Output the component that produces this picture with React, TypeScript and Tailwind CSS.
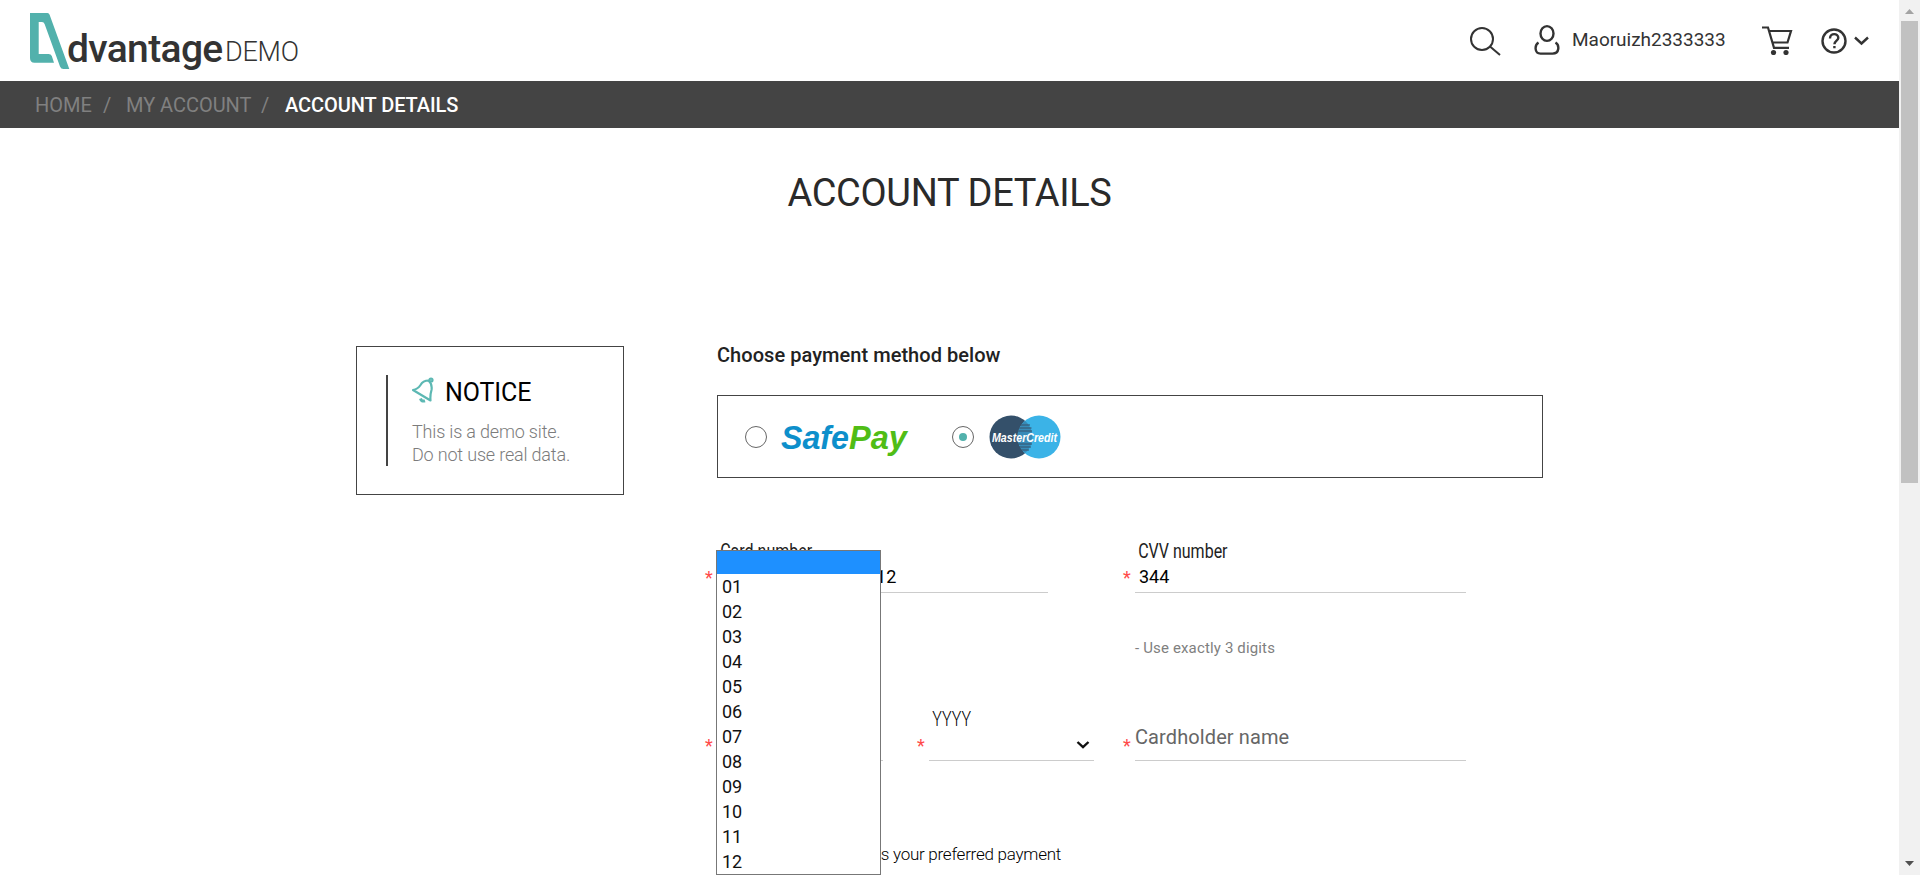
import React from "react";

const MONTHS = ["01", "02", "03", "04", "05", "06", "07", "08", "09", "10", "11", "12"];

function Logo() {
  return (
    <div className="flex items-start">
      <svg width="40" height="58" viewBox="0 0 40 58" className="mt-[12px] shrink-0">
        <path
          fill="#52b1ac"
          fillRule="evenodd"
          d="M0 1H17.500Q19 1 19.600 2.700L39.300 57H33.500Q31 57 30 54.500L14.600 12Q13.900 10 12 10H8.700V42H18.500Q21 42 21.800 44L24 50.700H4.500Q0 50.700 0 46Z"
        />
      </svg>
      <span className="-ml-[3px] mt-[24px] w-[158px] whitespace-nowrap text-[39px] leading-[50px] font-medium tracking-[-0.65px] text-[#333]">
        dvantage
      </span>
      <span className="mt-[32px] whitespace-nowrap text-[27px] leading-[40px] font-light tracking-[-0.25px] text-[#333]">DEMO</span>
    </div>
  );
}

function HeaderIcons() {
  return (
    <div className="flex items-start pr-[29px] text-[#333]">
      <svg width="32" height="30" viewBox="0 0 32 30" fill="none" stroke="currentColor" strokeWidth="2" className="mt-[26px]">
        <circle cx="12" cy="13" r="11" />
        <path d="M20 20.500L30 29" />
      </svg>
      <svg width="26" height="32" viewBox="0 0 26 32" fill="none" stroke="currentColor" strokeWidth="2.4" className="ml-[32px] mt-[24px]">
        <ellipse cx="13" cy="9.500" rx="6.500" ry="7.400" />
        <path d="M4.500 18.500C.5 21 .2 29.600 6.500 29.600H18.500C25.800 29.600 25.500 21 21.500 18.500" />
      </svg>
      <span className="ml-[12px] mt-[28px] w-[156px] whitespace-nowrap text-[19px] leading-6 tracking-[-0.02px] text-[#333]">Maoruizh2333333</span>
      <svg width="32" height="30" viewBox="0 0 32 30" fill="none" stroke="currentColor" strokeWidth="2.200" className="ml-[34px] mt-[25px]">
        <path d="M0 2.500H6L12 22.800H27M7.500 6H29L25.500 17.500H10.500" />
        <circle cx="11.500" cy="27.500" r="2.600" fill="currentColor" stroke="none" />
        <circle cx="24" cy="27.500" r="2.600" fill="currentColor" stroke="none" />
      </svg>
      <svg width="50" height="28" viewBox="0 0 50 28" fill="none" stroke="currentColor" strokeWidth="2.400" className="ml-[26px] mt-[27px]">
        <circle cx="14" cy="14" r="11.500" />
        <path d="M10 11.500C10 5.500 18.500 6 18.300 11C18.200 13.500 14.500 13.800 14.400 17.200M14.400 19V21.200" />
        <path d="M35 10.500L41.500 16.500L48 10.500" />
      </svg>
    </div>
  );
}

function Bell() {
  return (
    <svg width="22" height="26" viewBox="0 0 22 26" fill="none" stroke="#5cb8b3" strokeWidth="2.200" strokeLinejoin="round" className="mt-[2px]">
      <path d="M1 13Q6 12 8.500 8Q11 3.500 16.500 3.500Q20.500 7 19.500 13Q18 18 18.500 23.500Z" />
      <circle cx="19" cy="3" r="1.500" />
      <path d="M8.500 21.500Q9.500 25 13 23.800" strokeWidth="3" />
    </svg>
  );
}

function Radio({ checked = false }: { checked?: boolean }) {
  return (
    <span className="flex size-[22px] shrink-0 items-center justify-center rounded-full border border-[#666]">
      {checked && <span className="size-2 rounded-full bg-[#52b1ac]" />}
    </span>
  );
}

function SafePay() {
  return (
    <svg width="140" height="50" viewBox="0 0 140 50" fontFamily="Liberation Sans, sans-serif" fontWeight="700" fontStyle="italic" fontSize="33">
      <text x="0" y="37" textLength="68" lengthAdjust="spacingAndGlyphs" fill="#0d8fcb">Safe</text>
      <text x="68" y="37" textLength="58" lengthAdjust="spacingAndGlyphs" fill="#50bd16">Pay</text>
    </svg>
  );
}

function MasterCredit() {
  return (
    <svg width="72" height="44" viewBox="0 0 72 44">
      <circle cx="22" cy="22" r="21.500" fill="#34506a" />
      <circle cx="50" cy="22" r="21.500" fill="#3bb3e7" />
      <path d="M36 5.700A21.500 21.500 0 0 1 36 38.300A21.500 21.500 0 0 1 36 5.700Z" fill="#388bb8" />
      <path d="M31 10H41M29.500 13H42.500M29 16H43M29 29H43M30 32H42M32 35H40" stroke="#34506a" strokeWidth="1" />
      <text x="3" y="26.500" textLength="65" lengthAdjust="spacingAndGlyphs" fill="#fff" fontFamily="Liberation Sans, sans-serif" fontWeight="700" fontStyle="italic" fontSize="12.500">
        MasterCredit
      </text>
    </svg>
  );
}

type FieldProps = { label?: string; value?: string; placeholder?: string; width: string; arrow?: boolean; light?: boolean };

function Field({ label, value, placeholder, width, arrow, light }: FieldProps) {
  return (
    <div className="flex h-[54px]">
      <span className="w-3 pt-[27px] text-[18px] leading-6 text-[#ff4a4a]">*</span>
      <div className={`flex flex-col border-b border-[#ccc] ${width}`}>
        {placeholder ? (
          <span className="mt-[18px] text-[20px] leading-6 tracking-[0.1px] text-[#666]">{placeholder}</span>
        ) : (
          <>
            <span className={`h-6 origin-left pl-[4px] whitespace-nowrap text-[20px] leading-6 ${light ? "scale-x-[0.8] font-light text-black" : "scale-x-[0.8] font-normal text-[#222]"}`}>{label}</span>
            <div className="mt-0.5 flex h-6 items-center justify-between pl-[4px] text-[18px] leading-6 text-black">
              <span className="whitespace-nowrap">{value}</span>
              {arrow && (
                <svg width="14" height="10" viewBox="0 0 14 10" fill="none" stroke="#111" strokeWidth="2.400" className="mr-[4px]">
                  <path d="M1.500 2L7 7.200L12.500 2" />
                </svg>
              )}
            </div>
          </>
        )}
      </div>
    </div>
  );
}

function MonthList() {
  return (
    <ul className="absolute top-[550px] left-[716px] z-10 h-[325px] w-[165px] border border-[#777] bg-white text-[18px] text-[#111]">
      <li className="h-[23px] bg-[#1e90ff]" />
      {MONTHS.map((m) => (
        <li key={m} className="h-[25px] pl-[5px] leading-[26px]">{m}</li>
      ))}
    </ul>
  );
}

function Scrollbar() {
  return (
    <div className="flex h-full w-[21px] shrink-0 flex-col items-center bg-[#f1f1f1]">
      <svg width="21" height="21" viewBox="0 0 21 21"><path d="M6 14L10.500 9L15 14Z" fill="#a3a3a3" /></svg>
      <div className="h-[462px] w-[17px] bg-[#c1c1c1]" />
      <svg width="21" height="21" viewBox="0 0 21 21" className="mt-auto"><path d="M6 7L10.500 12L15 7Z" fill="#505050" /></svg>
    </div>
  );
}

export default function App() {
  return (
    <div className="relative flex h-[875px] w-[1920px] overflow-hidden bg-white font-[Roboto,sans-serif]">
      <div className="flex w-[1899px] flex-col">
        <header className="flex h-[81px] shrink-0 justify-between pl-[30px]">
          <Logo />
          <HeaderIcons />
        </header>
        <nav className="flex h-[47px] shrink-0 items-start bg-[#444] pt-[12px] pl-[35px] text-[20px] leading-6 whitespace-nowrap text-[#808080]">
          <span className="w-[68px]">HOME</span>
          <span className="w-[23px]">/</span>
          <span className="w-[135px] tracking-[-0.03px]">MY ACCOUNT</span>
          <span className="w-[24px]">/</span>
          <span className="font-medium tracking-[-0.07px] text-white">ACCOUNT DETAILS</span>
        </nav>
        <h1 className="mt-[39px] text-center text-[38px] leading-[52px] tracking-[-0.33px] text-[#2a2a2a]">ACCOUNT DETAILS</h1>
        <main className="mt-[122px] flex pl-[356px]">
          <aside className="mt-[5px] h-[149px] w-[268px] border border-[#444] pt-[28px] pl-[29px]">
            <div className="h-[91px] border-l-2 border-[#444] pl-[24px]">
              <div className="flex h-[34px] items-start">
                <Bell />
                <span className="mt-[1px] ml-[11px] text-[25px] leading-[34px] tracking-[-0.1px] text-black">NOTICE</span>
              </div>
              <p className="mt-[11px] text-[18px] leading-[23px] font-light tracking-[-0.18px] whitespace-nowrap text-[#7c7c7c]">
                This is a demo site.
                <br />
                Do not use real data.
              </p>
            </div>
          </aside>
          <section className="ml-[93px] w-[826px]">
            <h2 className="text-[20px] leading-7 font-medium tracking-[0.05px] text-[#222]">Choose payment method below</h2>
            <div className="mt-[26px] flex h-[83px] items-center border border-[#444] pl-[27px]">
              <Radio />
              <div className="ml-[14px] w-[171px]"><SafePay /></div>
              <Radio checked />
              <div className="ml-[15px]"><MasterCredit /></div>
            </div>
            <div className="mt-[61px] -ml-3 flex gap-[75px]">
              <Field label="Card number" value="4886 1234 5678 9012" width="w-[331px]" />
              <div>
                <Field label="CVV number" value="344" width="w-[331px]" />
                <p className="mt-[45px] ml-3 text-[15px] leading-5 tracking-[0.15px] text-[#808080]">- Use exactly 3 digits</p>
              </div>
            </div>
            <div className="mt-[49px] -ml-3 flex">
              <Field width="w-[166px]" arrow />
              <div className="ml-[34px]"><Field label="YYYY" width="w-[165px]" arrow light /></div>
              <div className="ml-[29px]"><Field placeholder="Cardholder name" width="w-[331px]" /></div>
            </div>
            <p className="mt-[81px] w-[344px] text-right text-[17px] leading-6 font-light tracking-[-0.25px] whitespace-nowrap text-black">
              Set this card as your preferred payment
            </p>
          </section>
        </main>
      </div>
      <Scrollbar />
      <MonthList />
    </div>
  );
}
